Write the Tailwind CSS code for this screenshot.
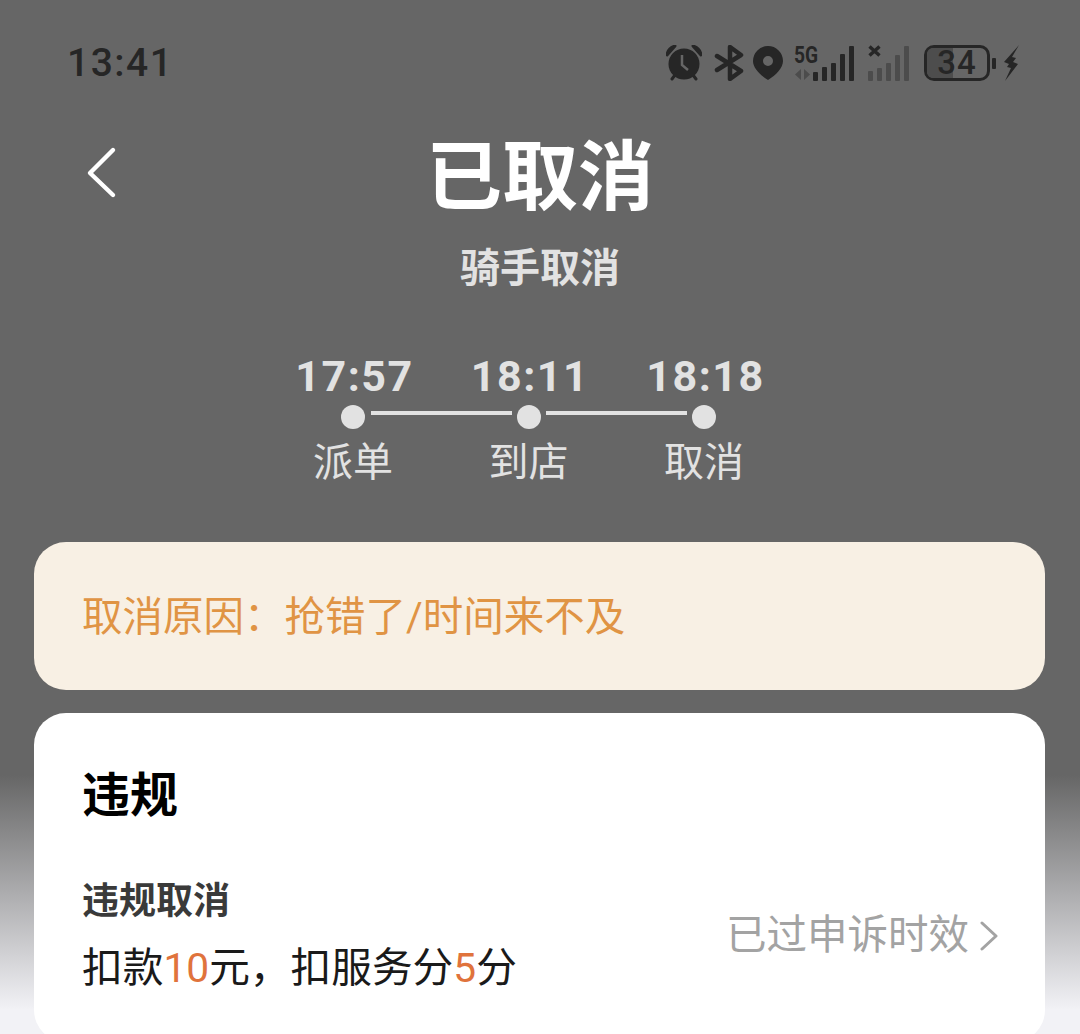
<!DOCTYPE html>
<html lang="zh">
<head>
<meta charset="utf-8">
<script src="https://cdn.jsdelivr.net/npm/@tailwindcss/browser@4"></script>
<title>已取消</title>
</head>
<body class="m-0">
<div class="w-[1080px] h-[1034px] overflow-hidden bg-[linear-gradient(to_bottom,#666666_0,#666666_775px,#f2f2f6_1010px)] font-['Roboto','Noto_Sans_CJK_SC',sans-serif]">

  <!-- status bar -->
  <div class="flex items-center justify-between h-[62px] mt-8 pl-[67px] pr-[60px] text-[#262626]">
    <span class="text-[39px] font-medium tracking-[1.5px] leading-none">13:41</span>
    <div class="flex items-center">
      <!-- alarm -->
      <svg class="w-9 h-9" viewBox="0 0 36 36"><path d="M1 10 Q2 3 9 1 Z M35 10 Q34 3 27 1 Z" stroke="#262626" stroke-width="3" fill="#262626" stroke-linejoin="round"/><path d="M6 34l3-4M30 34l-3-4" stroke="#262626" stroke-width="3" stroke-linecap="round"/><circle cx="18" cy="19" r="15.5" fill="#262626"/><path d="M16 10v10l6 5" stroke="#666" stroke-width="2.5" fill="none"/></svg>
      <!-- bluetooth -->
      <svg class="w-[30px] h-9 ml-[12px]" viewBox="0 0 30 36"><path d="M3 11l24 15-11 8V2l11 8L3 25" stroke="#262626" stroke-width="4.5" fill="none" stroke-linejoin="round" stroke-linecap="round"/></svg>
      <!-- location -->
      <svg class="w-[30px] h-[34px] ml-[9px]" viewBox="0 0 30 34"><path fill-rule="evenodd" fill="#262626" d="M15 0a15 15 0 0 1 15 15c0 7-7 14-15 19C7 29 0 22 0 15A15 15 0 0 1 15 0zm0 10a5 5 0 1 0 0 10 5 5 0 0 0 0-10z"/></svg>
      <!-- 5G signal -->
      <div class="relative w-[60px] h-9 ml-[11px] flex items-end justify-end gap-[4px]">
        <span class="absolute left-0 top-[-2px] text-[24px] font-bold leading-[24px] scale-x-[.8] origin-left">5G</span>
        <svg class="absolute left-0 bottom-[1px] w-[17px] h-[11px]" viewBox="0 0 17 11"><path d="M7 0v11L1 5.5zM10 0l6 5.5-6 5.5z" fill="#4c4c4c"/></svg>
        <i class="block w-[5px] h-[9px] bg-[#262626] rounded-[1px]"></i>
        <i class="block w-[5px] h-[14px] bg-[#262626] rounded-[1px]"></i>
        <i class="block w-[5px] h-[18px] bg-[#262626] rounded-[1px]"></i>
        <i class="block w-[5px] h-[27px] bg-[#262626] rounded-[1px]"></i>
        <i class="block w-[5px] h-[35px] bg-[#262626] rounded-[1px]"></i>
      </div>
      <!-- second sim -->
      <div class="relative w-[41px] h-9 ml-[14px] flex items-end justify-end gap-[4px]">
        <svg class="absolute left-0 top-0 w-[13px] h-[12px]" viewBox="0 0 13 12"><path d="M1.5 1.5l10 9M11.5 1.5l-10 9" stroke="#262626" stroke-width="3.4"/></svg>
        <i class="block w-[5px] h-[10px] bg-[#4c4c4c] rounded-[1px]"></i>
        <i class="block w-[5px] h-[13px] bg-[#4c4c4c] rounded-[1px]"></i>
        <i class="block w-[5px] h-[18px] bg-[#4c4c4c] rounded-[1px]"></i>
        <i class="block w-[5px] h-[26px] bg-[#4c4c4c] rounded-[1px]"></i>
        <i class="block w-[5px] h-[35px] bg-[#4c4c4c] rounded-[1px]"></i>
      </div>
      <!-- battery -->
      <div class="relative w-[66px] h-9 ml-[15px] rounded-[10px] border-[3px] border-[#262626] flex items-center justify-center">
        <i class="absolute left-0 top-0 bottom-0 w-[26px] bg-[#4d4d4d] rounded-l-[6px]"></i>
        <span class="relative text-[33px] font-medium leading-[30px] tracking-[1px] text-[#262626]">34</span>
      </div>
      <i class="block w-[4px] h-[11px] ml-[2px] bg-[#262626] rounded-[1px]"></i>
      <svg class="w-[17px] h-9 ml-[7px]" viewBox="0 0 17 36"><path d="M16 0L1 17l5 2-2 3 4 1-6 13 13-17-5-2 3-4-4-1z" fill="#262626"/></svg>
    </div>
  </div>

  <!-- title -->
  <div class="relative flex flex-col items-center mt-[32px] h-[173px]">
    <svg class="absolute left-[84px] top-[20px] w-9 h-[54px]" viewBox="0 0 36 54"><path d="M29 4L6 27l23 22" stroke="#fff" stroke-width="4.4" fill="none" stroke-linecap="round" stroke-linejoin="round"/></svg>
    <h1 class="text-[76px] font-bold leading-[100px] text-white mt-[2px]">已取消</h1>
    <p class="text-[40px] font-bold leading-[56px] text-[#e2e2e2] mt-[13px]">骑手取消</p>
  </div>

  <!-- timeline -->
  <div class="flex justify-center mt-[51px] pr-[23px] text-[#e2e2e2]">
    <div class="flex flex-col items-center w-[176px]">
      <span class="text-[43px] font-bold leading-[52px] tracking-[1.5px] pl-[3px]">17:57</span>
      <div class="flex items-center w-full h-[24px] mt-[3px]">
        <span class="flex-1 mr-[6px]"></span>
        <i class="block w-6 h-6 rounded-full bg-[#e2e2e2]"></i>
        <span class="flex-1 h-[4px] ml-[6px] bg-[#e2e2e2] -translate-y-[4px]"></span>
      </div>
      <span class="text-[40px] leading-[56px] mt-[6px]">派单</span>
    </div>
    <div class="flex flex-col items-center w-[175px]">
      <span class="text-[43px] font-bold leading-[52px] tracking-[1.5px] pl-[3px]">18:11</span>
      <div class="flex items-center w-full h-[24px] mt-[3px]">
        <span class="flex-1 h-[4px] mr-[5px] bg-[#e2e2e2] -translate-y-[4px]"></span>
        <i class="block w-6 h-6 rounded-full bg-[#e2e2e2]"></i>
        <span class="flex-1 h-[4px] ml-[5px] bg-[#e2e2e2] -translate-y-[4px]"></span>
      </div>
      <span class="text-[40px] leading-[56px] mt-[6px]">到店</span>
    </div>
    <div class="flex flex-col items-center w-[176px]">
      <span class="text-[43px] font-bold leading-[52px] tracking-[1.5px] pl-[3px]">18:18</span>
      <div class="flex items-center w-full h-[24px] mt-[3px]">
        <span class="flex-1 h-[4px] mr-[5px] bg-[#e2e2e2] -translate-y-[4px]"></span>
        <i class="block w-6 h-6 rounded-full bg-[#e2e2e2]"></i>
        <span class="flex-1 ml-[5px]"></span>
      </div>
      <span class="text-[40px] leading-[56px] mt-[6px]">取消</span>
    </div>
  </div>

  <!-- reason -->
  <div class="mx-[34px] w-[1011px] mt-[51px] h-[148px] rounded-[32px] bg-[#f8f0e4] flex items-center px-[48px]">
    <span class="text-[40.5px] text-[#e09444] mt-[2px]">取消原因：抢错了/时间来不及</span>
  </div>

  <!-- violation -->
  <div class="mx-[34px] w-[1011px] mt-[23px] h-[329px] rounded-[32px] bg-white px-[48px] pt-[51px]">
    <h2 class="text-[48px] font-bold leading-[64px] text-black">违规</h2>
    <div class="flex items-center justify-between mt-[49px]">
      <div>
        <p class="text-[37px] font-bold leading-[50px] text-[#3a3a3a]">违规取消</p>
        <p class="text-[40.7px] leading-[56px] text-[#1a1a1a] mt-[13px]">扣款<span class="text-[#e0733c]">10</span>元，扣服务分<span class="text-[#e0733c]">5</span>分</p>
      </div>
      <div class="flex items-center text-[40.5px] text-[#a3a3a3] mr-[-2px] mb-[2px]">
        已过申诉时效
        <svg class="w-5 h-[30px] ml-[10px]" viewBox="0 0 20 30"><path d="M3 2l14 13L3 28" stroke="#a3a3a3" stroke-width="3" fill="none" stroke-linecap="round" stroke-linejoin="round"/></svg>
      </div>
    </div>
  </div>
</div>
</body>
</html>
